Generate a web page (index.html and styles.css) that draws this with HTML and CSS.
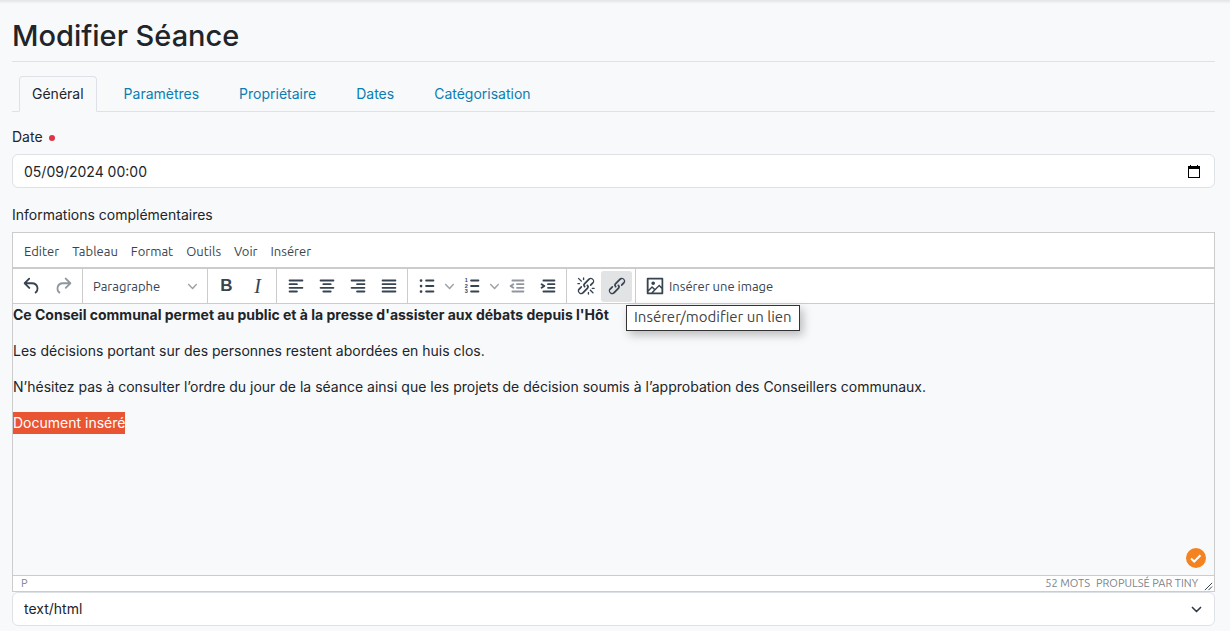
FILE: index.html
```html
<!DOCTYPE html>
<html lang="fr">
<head>
<meta charset="utf-8">
<meta name="viewport" content="width=device-width, initial-scale=1">
<title>Modifier Séance</title>
<link rel="stylesheet" href="styles.css">
</head>
<body>
<main class="page">
  <h1 class="page-title">Modifier Séance</h1>

  <nav class="tabs">
    <a class="tab tab-active" href="#general">Général</a>
    <a class="tab" href="#parametres">Paramètres</a>
    <a class="tab" href="#proprietaire">Propriétaire</a>
    <a class="tab" href="#dates">Dates</a>
    <a class="tab" href="#categorisation">Catégorisation</a>
  </nav>

  <form class="form">
    <div class="field">
      <label class="label" for="date">Date <span class="required"></span></label>
      <div class="control">
        <input class="input" id="date" type="text" value="05/09/2024 00:00">
        <button class="calendar" type="button" aria-label="Calendrier">
          <svg viewBox="0 0 12 13" width="12" height="13"><path fill="#000" d="M0 1h2V0h1v1h6V0h1v1h2v12H0zM1 4v8h10V4z"/></svg>
        </button>
      </div>
    </div>

    <div class="field">
      <label class="label" for="body">Informations complémentaires</label>
      <div class="editor">
        <div class="menubar">
          <button class="menu" type="button">Editer</button>
          <button class="menu" type="button">Tableau</button>
          <button class="menu" type="button">Format</button>
          <button class="menu" type="button">Outils</button>
          <button class="menu" type="button">Voir</button>
          <button class="menu" type="button">Insérer</button>
        </div>
        <div class="toolbar">
          <div class="group">
            <button class="tool" type="button" aria-label="Annuler"><svg class="icon" viewBox="0 0 24 24"><path d="M6.4 8H12c3.7 0 6.2 2 6.8 5.1.6 2.7-.4 5.6-2.3 6.8a1 1 0 01-1-1.8c1.1-.6 1.8-2.7 1.4-4.6-.5-2.1-2.1-3.5-4.9-3.5H6.4l3.3 3.3a1 1 0 11-1.4 1.4l-5-5a1 1 0 010-1.4l5-5a1 1 0 011.4 1.4L6.4 8z"/></svg></button>
            <button class="tool" type="button" aria-label="Rétablir" disabled><svg class="icon" viewBox="0 0 24 24"><path d="M17.6 10H12c-2.8 0-4.4 1.4-4.9 3.5-.4 2 .3 4 1.4 4.6a1 1 0 11-1 1.8c-2-1.2-2.9-4.1-2.3-6.8.6-3 3-5.1 6.8-5.1h5.6l-3.3-3.3a1 1 0 111.4-1.4l5 5a1 1 0 010 1.4l-5 5a1 1 0 01-1.4-1.4l3.3-3.3z"/></svg></button>
          </div>
          <div class="group">
            <button class="tool tool-select" type="button">Paragraphe<svg class="chevron" viewBox="0 0 10 10"><path d="M8.7 2.2c.3-.3.8-.3 1 0 .4.4.4.9 0 1.2L5.7 7.8c-.3.3-.9.3-1.2 0L.2 3.4a.8.8 0 010-1.2c.3-.3.8-.3 1.1 0L5 6l3.7-3.8z"/></svg></button>
          </div>
          <div class="group">
            <button class="tool tool-bold" type="button">B</button>
            <button class="tool tool-italic" type="button">I</button>
          </div>
          <div class="group">
            <button class="tool" type="button" aria-label="Aligner à gauche"><svg class="icon line" viewBox="0 0 24 24"><path d="M5 6h14M5 10h8M5 14h14M5 18h8"/></svg></button>
            <button class="tool" type="button" aria-label="Centrer"><svg class="icon line" viewBox="0 0 24 24"><path d="M5 6h14M8 10h8M5 14h14M8 18h8"/></svg></button>
            <button class="tool" type="button" aria-label="Aligner à droite"><svg class="icon line" viewBox="0 0 24 24"><path d="M5 6h14M11 10h8M5 14h14M11 18h8"/></svg></button>
            <button class="tool" type="button" aria-label="Justifier"><svg class="icon line" viewBox="0 0 24 24"><path d="M5 6h14M5 10h14M5 14h14M5 18h14"/></svg></button>
          </div>
          <div class="group">
            <button class="tool" type="button" aria-label="Liste à puces"><svg class="icon line" viewBox="0 0 24 24"><path d="M11 6h8M11 12h8M11 18h8"/><path class="dots" d="M5.5 6h0M5.5 12h0M5.5 18h0"/></svg></button>
            <button class="tool tool-more" type="button" aria-label="Styles de puces"><svg class="chevron" viewBox="0 0 10 10"><path d="M8.7 2.2c.3-.3.8-.3 1 0 .4.4.4.9 0 1.2L5.7 7.8c-.3.3-.9.3-1.2 0L.2 3.4a.8.8 0 010-1.2c.3-.3.8-.3 1.1 0L5 6l3.7-3.8z"/></svg></button>
            <button class="tool" type="button" aria-label="Liste numérotée"><svg class="icon line" viewBox="0 0 24 24"><path d="M11 6h8M11 12h8M11 18h8"/><g class="digits"><text x="4" y="8">1</text><text x="4" y="14">2</text><text x="4" y="20">3</text></g></svg></button>
            <button class="tool tool-more" type="button" aria-label="Styles de numéros"><svg class="chevron" viewBox="0 0 10 10"><path d="M8.7 2.2c.3-.3.8-.3 1 0 .4.4.4.9 0 1.2L5.7 7.8c-.3.3-.9.3-1.2 0L.2 3.4a.8.8 0 010-1.2c.3-.3.8-.3 1.1 0L5 6l3.7-3.8z"/></svg></button>
            <button class="tool" type="button" aria-label="Diminuer le retrait" disabled><svg class="icon line" viewBox="0 0 24 24"><path d="M7 6h12M12 10h7M12 14h7M7 18h12M8 10l-3 2 3 2"/></svg></button>
            <button class="tool" type="button" aria-label="Augmenter le retrait"><svg class="icon line" viewBox="0 0 24 24"><path d="M7 6h12M12 10h7M12 14h7M7 18h12M5 10l3 2-3 2"/></svg></button>
          </div>
          <div class="group">
            <button class="tool" type="button" aria-label="Supprimer le lien"><svg class="icon" viewBox="0 0 24 24"><path d="M6.2 12.3a1 1 0 011.4 1.4l-2 2a2 2 0 102.6 2.8l4.8-4.8a1 1 0 000-1.4 1 1 0 111.4-1.3 2.9 2.9 0 010 4L9.6 20a3.9 3.9 0 01-5.5-5.5l2-2zm11.6-.6a1 1 0 01-1.4-1.4l2.1-2a2 2 0 10-2.7-2.8L11 10.3a1 1 0 000 1.4A1 1 0 119.6 13a2.9 2.9 0 010-4L14.4 4a3.9 3.9 0 015.5 5.5l-2 2zM7.6 6.3a.8.8 0 01-1 1.1L3.3 4.2a.7.7 0 111-1l3.2 3.1zM5.1 8.6a.8.8 0 010 1.5H3a.8.8 0 010-1.5H5zm5-3.5a.8.8 0 01-1.5 0V3a.8.8 0 011.5 0V5zm6 11.8a.8.8 0 011-1l3.2 3.2a.8.8 0 01-1 1L16 17zm-2.2 2a.8.8 0 011.5 0V21a.8.8 0 01-1.5 0V19zm5-3.5a.7.7 0 110-1.5H21a.8.8 0 010 1.5H19z"/></svg></button>
            <div class="tip-anchor">
              <button class="tool tool-active" type="button" aria-describedby="link-tip" aria-label="Lien"><svg class="icon" viewBox="0 0 24 24"><path d="M6.2 12.3a1 1 0 011.4 1.4l-2.1 2a2 2 0 102.7 2.8l4.8-4.8a1 1 0 000-1.4 1 1 0 111.4-1.3 2.9 2.9 0 010 4L9.6 20a3.9 3.9 0 01-5.5-5.5l2-2zm11.6-.6a1 1 0 01-1.4-1.4l2-2a2 2 0 10-2.6-2.8L11 10.3a1 1 0 000 1.4A1 1 0 119.6 13a2.9 2.9 0 010-4L14.4 4a3.9 3.9 0 015.5 5.5l-2 2z"/></svg></button>
              <span class="tooltip" id="link-tip" role="tooltip">Insérer/modifier un lien</span>
            </div>
          </div>
          <div class="group">
            <button class="tool tool-text" type="button"><svg class="icon" viewBox="0 0 24 24"><path d="M5 15.7l3.3-3.2c.3-.3.7-.3 1 0L12 15l4.1-4c.3-.4.8-.4 1 0l2 1.9V5H5v10.7zM5 18V19h3l2.8-2.9-2-2L5 17.9zm14-3l-2.5-2.4-6.4 6.5H19v-4zM4 3h16c.6 0 1 .4 1 1v16c0 .6-.4 1-1 1H4a1 1 0 01-1-1V4c0-.6.4-1 1-1zm6 8a2 2 0 100-4 2 2 0 000 4z"/></svg>Insérer une image</button>
          </div>
        </div>
        <div class="content" id="body" contenteditable="true" spellcheck="false">
          <p><strong>Ce Conseil communal permet au public et à la presse d'assister aux débats depuis l'Hôt</strong></p>
          <p>Les décisions portant sur des personnes restent abordées en huis clos.</p>
          <p>N’hésitez pas à consulter l’ordre du jour de la séance ainsi que les projets de décision soumis à l’approbation des Conseillers communaux.</p>
          <p><mark class="selection">Document inséré</mark></p>
        </div>
        <svg class="checker" viewBox="0 0 20 20"><circle cx="10" cy="10" r="10"/><path d="M5 10.500l3.200 3 6.300-6.300"/></svg>
        <div class="statusbar">
          <span class="path">P</span>
          <span>52 mots</span>
          <span>Propulsé par Tiny</span>
          <svg class="grip" viewBox="0 0 10 10"><path d="M1 9l8-8M5 9l4-4"/></svg>
        </div>
      </div>
      <div class="control">
        <select class="input" aria-label="Format du texte"><option>text/html</option></select>
        <svg class="caret" viewBox="0 0 16 16"><path d="M3 5.500l5 5 5-5"/></svg>
      </div>
    </div>
  </form>
</main>
</body>
</html>
```
FILE: styles.css
```css
* { box-sizing: border-box; }

body {
  margin: 0;
  background: #f8f9fb;
  color: #212529;
  font-family: Inter, "Liberation Sans", sans-serif;
  font-size: 14px;
  line-height: 22px;
}

button, input, select { font: inherit; color: inherit; }
button { border: 0; background: none; padding: 0; }

.page {
  padding: 15px 15px 4px 12px;
  background: linear-gradient(#e2e4e6, #f8f9fb 4px);
}

.page-title {
  margin: 0 0 14px;
  padding-bottom: 5px;
  border-bottom: 1px solid #dee2e6;
  font-size: 29px;
  font-weight: 500;
  line-height: 41px;
}

.tabs {
  display: flex;
  gap: 14px;
  padding-left: 7px;
  border-bottom: 1px solid #dee2e6;
}
.tab {
  margin-bottom: -1px;
  padding: 6px 12px;
  border: 1px solid transparent;
  border-radius: 4px 4px 0 0;
  color: #0a7eb1;
  text-decoration: none;
}
.tab-active {
  border-color: #dee2e6 #dee2e6 #f8f9fb;
  color: #212529;
}

.form {
  display: flex;
  flex-direction: column;
  gap: 16px;
  padding-top: 14px;
}
.label { display: block; margin-bottom: 6px; }
.required {
  display: inline-block;
  width: 6px;
  height: 6px;
  margin-left: 2px;
  border-radius: 50%;
  background: #dc3545;
  vertical-align: 1px;
}

.control { position: relative; }
.input {
  display: block;
  width: 100%;
  height: 34px;
  padding: 0 11px;
  border: 1px solid #dee2e6;
  border-radius: 6px;
  background: #fff;
  appearance: none;
}
.calendar {
  position: absolute;
  top: 11px;
  right: 15px;
  display: flex;
}
.caret {
  position: absolute;
  top: 11px;
  right: 12px;
  width: 13px;
  fill: none;
  stroke: #343a40;
  stroke-width: 2;
  stroke-linecap: round;
  stroke-linejoin: round;
}

.editor {
  position: relative;
  border: 1px solid #ccc;
  background: #fff;
}
.menubar, .toolbar, .statusbar, .tooltip {
  font-family: Ubuntu, "Noto Sans", sans-serif;
  color: #222f3e;
}
.menubar {
  display: flex;
  gap: 13px;
  height: 36px;
  padding: 2px 11px 0;
  border-bottom: 2px solid #ccc;
  font-size: 13px;
}
.toolbar {
  display: flex;
  height: 35px;
  border-bottom: 1px solid #ccc;
  font-size: 13px;
}
.menu, .tool { opacity: .9; }
.group {
  display: flex;
  align-items: center;
  padding: 0 3px;
  border-right: 1px solid #ccc;
}
.group:first-child { padding-right: 4px; }
.group:last-child { border-right: 0; }
.tool {
  display: flex;
  align-items: center;
  justify-content: center;
  width: 31px;
  height: 31px;
  border-radius: 3px;
}
.tool:disabled { opacity: .5; }
.tool-active { background: #dee0e2; }
.tool-select {
  justify-content: space-between;
  width: 118px;
  padding: 0 7px;
}
.tool-more { width: 14px; }
.tool-text { width: auto; gap: 3px; padding: 0 5px; }
.tool-bold { font: 700 17px "Liberation Sans", sans-serif; }
.tool-italic { font: italic 20px "Liberation Serif", serif; }

.icon { width: 22px; height: 22px; fill: #222f3e; }
.line { fill: none; stroke: #222f3e; stroke-width: 2; stroke-linecap: round; stroke-linejoin: round; }
.dots { stroke-width: 3; }
.digits { fill: #222f3e; stroke: none; font: 700 6px "Liberation Sans", sans-serif; }
.chevron { width: 9px; height: 9px; fill: #222f3e; opacity: .5; }

.tip-anchor { position: relative; }
.tooltip {
  position: absolute;
  z-index: 2;
  top: 34px;
  left: 25px;
  padding: 1px 7px 3px;
  border: 1px solid #333;
  background: #fff;
  box-shadow: 3px 4px 10px rgba(0, 0, 0, .25);
  color: #444;
  font-size: 15px;
  line-height: 20px;
  white-space: nowrap;
}

.content {
  min-height: 271px;
  background: #f8f9fb;
  outline: 0;
}
.content p { margin: 0 0 14px; }
.content p:last-child { margin: 0; }
.selection { background: #e95433; color: #fff; display: inline-block; }

.checker {
  position: absolute;
  right: 8px;
  bottom: 23px;
  width: 20px;
  height: 20px;
  fill: #f58220;
}
.checker path { fill: none; stroke: #fff; stroke-width: 2; }

.statusbar {
  display: flex;
  align-items: center;
  gap: 6px;
  height: 16px;
  padding: 0 1px 0 8px;
  border-top: 1px solid #ccc;
  color: #7a828b;
  font-size: 11px;
  line-height: 15px;
  text-transform: uppercase;
}
.path { flex: 1; }
.grip { align-self: flex-end; width: 9px; height: 9px; fill: none; stroke: #222f3e; }
```
